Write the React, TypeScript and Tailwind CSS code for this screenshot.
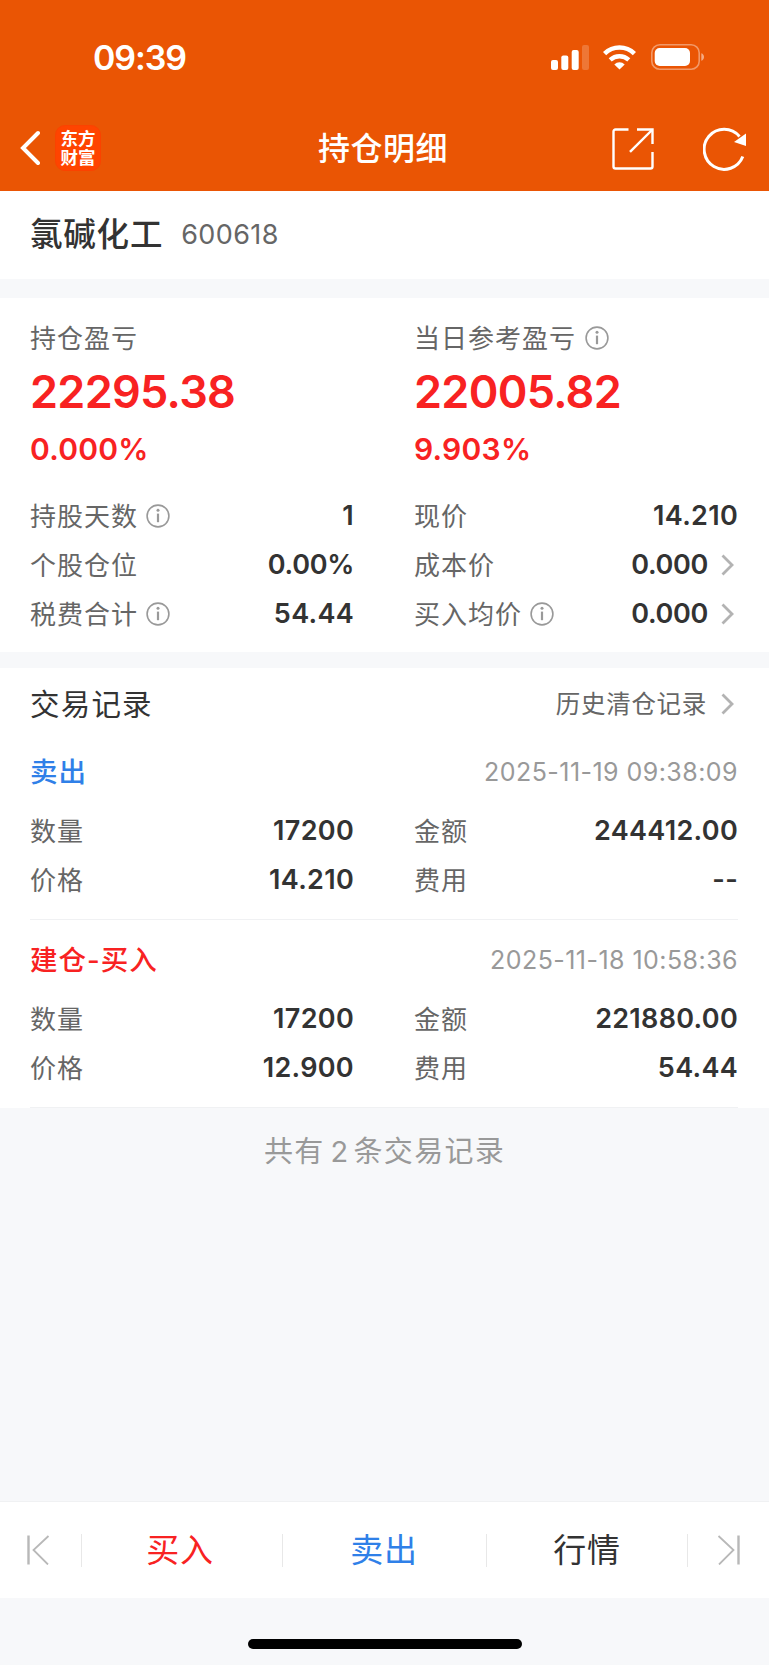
import React from 'react';

interface FieldProps {
  label: string;
  value: string;
  info?: boolean;
  link?: boolean;
  tight?: boolean;
}

interface TradeRecord {
  id: number;
  title: string;
  side: 'buy' | 'sell';
  time: string;
  fields: FieldProps[];
}

const positionFields: FieldProps[] = [
  { label: '持股天数', value: '1', info: true },
  { label: '现价', value: '14.210' },
  { label: '个股仓位', value: '0.00%', tight: true },
  { label: '成本价', value: '0.000', link: true, tight: true },
  { label: '税费合计', value: '54.44', info: true },
  { label: '买入均价', value: '0.000', info: true, link: true, tight: true }
];

const records: TradeRecord[] = [
  {
    id: 1,
    title: '卖出',
    side: 'sell',
    time: '2025-11-19 09:38:09',
    fields: [
      { label: '数量', value: '17200' },
      { label: '金额', value: '244412.00' },
      { label: '价格', value: '14.210' },
      { label: '费用', value: '--' }
    ]
  },
  {
    id: 2,
    title: '建仓-买入',
    side: 'buy',
    time: '2025-11-18 10:58:36',
    fields: [
      { label: '数量', value: '17200' },
      { label: '金额', value: '221880.00' },
      { label: '价格', value: '12.900' },
      { label: '费用', value: '54.44' }
    ]
  }
];

const InfoIcon = () => (
  <svg width="24" height="24" viewBox="0 0 24 24" fill="none" className="mb-px shrink-0">
    <circle cx="12" cy="12" r="10.9" stroke="#999" strokeWidth="1.6" />
    <path d="M12 9.6v8.6" stroke="#999" strokeWidth="2.2" />
    <circle cx="12" cy="6.3" r="1.5" fill="#999" />
  </svg>
);

const ChevronIcon = () => (
  <svg width="13" height="22" viewBox="0 0 13 22" fill="none" className="mb-px shrink-0">
    <path d="M1.5 1.5L11 11L1.5 20.5" stroke="#b3b3b3" strokeWidth="2.8" />
  </svg>
);

const Field: React.FC<FieldProps> = ({ label, value, info, link, tight }) => (
  <div className="flex h-[49px] items-center justify-between">
    <div className="flex items-center gap-[8px]">
      <span className="text-[26px] tracking-[1px] text-[#666]">{label}</span>
      {info && <InfoIcon />}
    </div>
    <div className="flex items-center gap-[13px]">
      <span
        className={
          tight
            ? 'text-[27px] font-semibold tracking-[-0.3px] text-[#333]'
            : 'text-[27px] font-semibold tracking-[0.3px] text-[#333]'
        }
      >
        {value}
      </span>
      {link && (
        <span className="pr-1">
          <ChevronIcon />
        </span>
      )}
    </div>
  </div>
);

const StatusBar = () => (
  <div className="flex h-[114px] items-center justify-between pl-[93px] pr-[64px] text-white">
    <span className="pt-[2px] text-[34px] font-semibold leading-none tracking-[-1.1px]">09:39</span>
    <div className="flex items-center">
      <svg width="38" height="25" viewBox="0 0 38 25" fill="currentColor">
        <rect x="0" y="15" width="7" height="10" rx="2" />
        <rect x="10.3" y="10.5" width="7" height="14.5" rx="2" />
        <rect x="20.7" y="5" width="7" height="20" rx="2" />
        <rect x="31" y="0" width="7" height="25" rx="2" opacity="0.2" />
      </svg>
      <svg width="33" height="25" viewBox="0 0 33 25" fill="none" className="ml-[14px]">
        <path d="M1.6 8.6a21.4 21.4 0 0 1 29.8 0" stroke="currentColor" strokeWidth="4.6" />
        <path d="M7.2 14.9a13.6 13.6 0 0 1 18.6 0" stroke="currentColor" strokeWidth="4.4" />
        <path d="M11.3 19.4a7.6 7.6 0 0 1 10.4 0L16.5 24.6z" fill="currentColor" />
      </svg>
      <svg width="54" height="26" viewBox="0 0 54 26" fill="none" className="ml-[15px]">
        <rect x="0.8" y="0.8" width="47.4" height="24.4" rx="8" stroke="currentColor" strokeOpacity="0.4" strokeWidth="1.6" />
        <rect x="3.7" y="4" width="35.3" height="18" rx="5" fill="currentColor" />
        <path d="M50.3 9.2c3.6 1.2 3.6 6.4 0 7.6z" fill="currentColor" fillOpacity="0.5" />
      </svg>
    </div>
  </div>
);

const NavBar = () => (
  <div className="grid h-[68px] grid-cols-[1fr_auto_1fr] items-center pl-[19px] pr-[22px] text-white">
    <div className="flex items-center gap-[15px] pb-px">
      <svg width="21" height="36" viewBox="0 0 21 36" fill="none">
        <path d="M19 3L4 18L19 33" stroke="currentColor" strokeWidth="4" strokeLinecap="round" />
      </svg>
      <div className="flex h-[46px] w-[46px] flex-col items-center justify-center rounded-[10px] border border-[#fb4200] bg-[#ff4400] text-[17.5px] font-bold leading-[19px]">
        <span>东方</span>
        <span>财富</span>
      </div>
    </div>
    <h1 className="pt-[2px] text-[32px] font-medium tracking-[0.5px]">持仓明细</h1>
    <div className="flex items-center justify-end gap-[49px] pt-[2px]">
      <svg width="42" height="42" viewBox="0 0 42 42" fill="none" stroke="currentColor" strokeWidth="2.4">
        <path d="M16.5 1.5H3.5a2 2 0 0 0-2 2v35a2 2 0 0 0 2 2h35a2 2 0 0 0 2-2V24" />
        <path d="M25 1.5h15.5V16" />
        <path d="M40 2L18 23.8" />
      </svg>
      <svg width="44" height="44" viewBox="0 0 44 44" fill="none">
        <path d="M39.8 29.5A20 20 0 1 1 36.5 9.5" stroke="currentColor" strokeWidth="3" />
        <path d="M43 6.5v12.4L31 15z" fill="currentColor" />
      </svg>
    </div>
  </div>
);

const ProfitBlock: React.FC<{ label: string; amount: string; percent: string; info?: boolean }> = ({
  label,
  amount,
  percent,
  info
}) => (
  <div>
    <div className="flex h-[36px] items-center gap-[9px]">
      <span className="text-[26px] tracking-[1px] text-[#666]">{label}</span>
      {info && <InfoIcon />}
    </div>
    <p className="mt-2 h-[56px] text-[45px] font-semibold leading-[56px] tracking-[-0.7px] text-[#f82222]">{amount}</p>
    <p className="mt-[9px] h-[41px] text-[30px] font-semibold leading-[40px] tracking-[0.25px] text-[#f82222]">
      {percent}
    </p>
  </div>
);

const RecordItem: React.FC<{ record: TradeRecord }> = ({ record }) => (
  <div className="ml-[30px] mr-[31px] h-[188px] border-b border-[#f0f1f3] pt-4">
    <div className="flex h-[50px] items-center justify-between">
      <span
        className={
          record.side === 'buy'
            ? 'text-[27.5px] font-medium tracking-[1px] text-[#f82222]'
            : 'text-[27.5px] font-medium tracking-[1px] text-[#2f80e8]'
        }
      >
        {record.title}
      </span>
      <span className="text-[25px] tracking-[0.45px] text-[#999]">{record.time}</span>
    </div>
    <div className="mt-[9px] grid grid-cols-2 gap-x-[60px]">
      {record.fields.map((field) => (
        <Field key={field.label} {...field} />
      ))}
    </div>
  </div>
);

const Divider = () => <span className="h-[33px] w-px shrink-0 bg-[#e8e8e8]" />;

const BottomBar = () => (
  <div className="flex h-[97px] items-center border-t border-[#f0f1f3] bg-white text-[33px] tracking-[0.8px]">
    <button className="flex w-[81px] pl-[27px]">
      <svg width="23" height="30" viewBox="0 0 23 30" fill="none" stroke="#b8b8b8" strokeWidth="1.8">
        <path d="M1.5 0.5v29" strokeWidth="2.4" />
        <path d="M21.5 1L6.5 15L21 29.5" />
      </svg>
    </button>
    <Divider />
    <button className="w-[200px] pr-1 pt-[2px] text-[#f82222]">买入</button>
    <Divider />
    <button className="w-[203px] pr-px pt-[2px] text-[#2f80e8]">卖出</button>
    <Divider />
    <button className="w-[200px] pt-[2px] text-[#333]">行情</button>
    <Divider />
    <button className="flex flex-1 justify-end pr-[29px]">
      <svg width="23" height="30" viewBox="0 0 23 30" fill="none" stroke="#b8b8b8" strokeWidth="1.8">
        <path d="M21.5 0.5v29" strokeWidth="2.4" />
        <path d="M1.5 1L16.5 15L2 29.5" />
      </svg>
    </button>
  </div>
);

const App: React.FC = () => {
  return (
    <div className="flex h-[1665px] w-[769px] flex-col bg-[#f7f8fa] font-['Inter','Noto_Sans_CJK_SC',sans-serif]">
      <header className="h-[191px] bg-[#ea5504]">
        <StatusBar />
        <NavBar />
      </header>

      <section className="flex h-[88px] items-center gap-[18px] bg-white px-[30px]">
        <h2 className="text-[32.5px] font-medium tracking-[0.8px] text-[#333]">氯碱化工</h2>
        <span className="text-[27px] tracking-[0.4px] text-[#666]">600618</span>
      </section>

      <section className="mt-[19px] h-[354px] bg-white pl-[30px] pr-[31px] pt-[22px]">
        <div className="grid grid-cols-2 gap-x-[60px]">
          <ProfitBlock label="持仓盈亏" amount="22295.38" percent="0.000%" />
          <ProfitBlock label="当日参考盈亏" amount="22005.82" percent="9.903%" info />
        </div>
        <div className="mt-[22px] grid grid-cols-2 gap-x-[60px]">
          {positionFields.map((field) => (
            <Field key={field.label} {...field} />
          ))}
        </div>
      </section>

      <section className="mt-4 bg-white">
        <div className="flex h-[64px] items-center justify-between pl-[30px] pr-[31px] pt-2">
          <h3 className="text-[29.5px] tracking-[1.2px] text-[#333]">交易记录</h3>
          <button className="flex items-center gap-[14px] pr-1 text-[24.5px] tracking-[0.7px] text-[#666]">
            历史清仓记录
            <ChevronIcon />
          </button>
        </div>
        {records.map((record) => (
          <RecordItem key={record.id} record={record} />
        ))}
      </section>

      <p className="mt-[22px] text-center text-[29px] tracking-[1.3px] text-[#999]">
        共有<span className="ml-[6px] mr-[4px]">2</span>条交易记录
      </p>

      <footer className="mt-auto">
        <BottomBar />
        <div className="flex h-[67px] justify-center pt-[41px]">
          <span className="h-[10px] w-[274px] rounded-full bg-black" />
        </div>
      </footer>
    </div>
  );
};

export default App;
